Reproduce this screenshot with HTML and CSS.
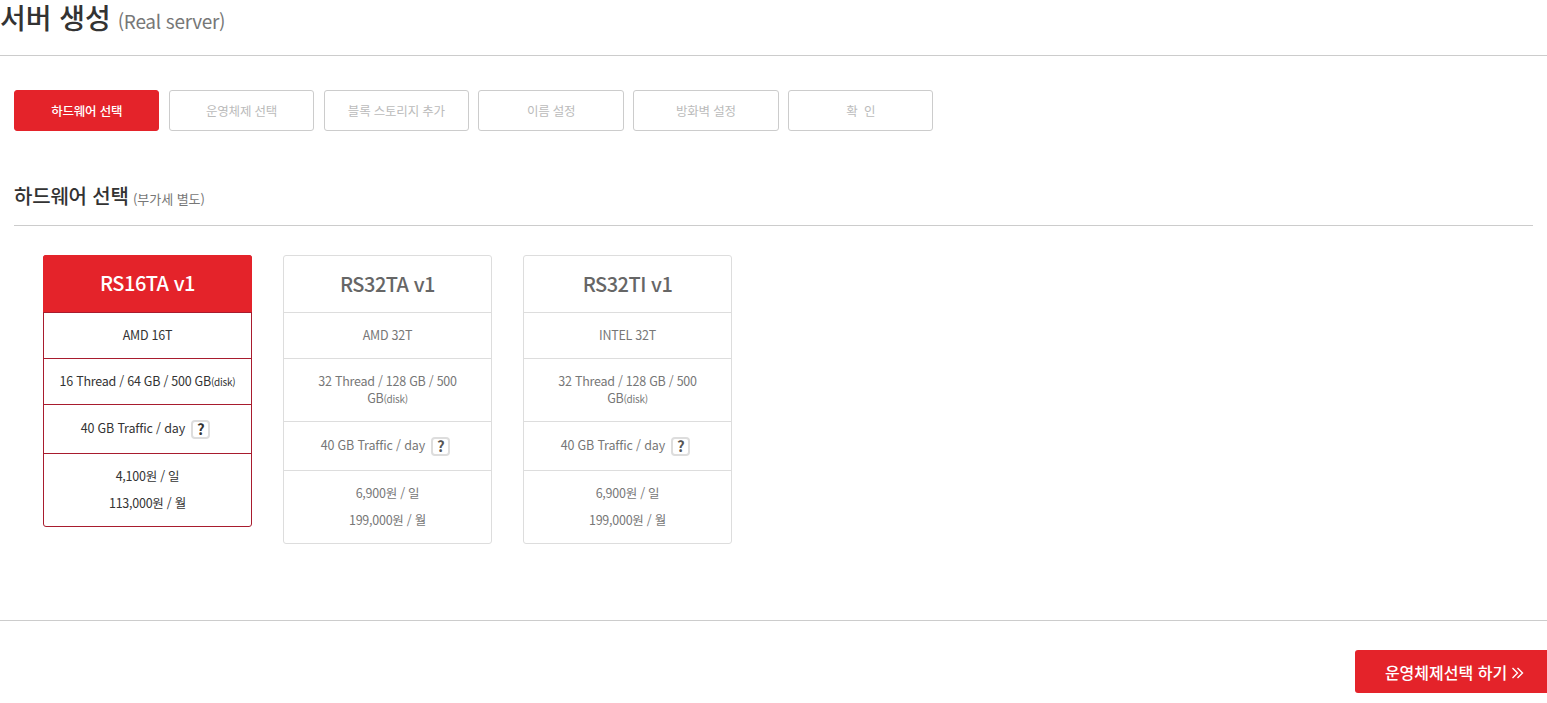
FILE: index.html
```html
<!DOCTYPE html>
<html lang="ko">
<head>
<meta charset="utf-8">
<title>서버 생성</title>
<link rel="stylesheet" href="styles.css">
</head>
<body>
<header class="page-head">
  <h1>서버 생성 <small>(Real server)</small></h1>
</header>
<nav class="steps">
  <a class="step active">하드웨어 선택</a>
  <a class="step">운영체제 선택</a>
  <a class="step">블록 스토리지 추가</a>
  <a class="step">이름 설정</a>
  <a class="step">방화벽 설정</a>
  <a class="step">확 &nbsp;인</a>
</nav>
<section class="hardware">
  <h2>하드웨어 선택 <small>(부가세 별도)</small></h2>
  <div class="cards">
    <article class="card selected">
      <h3>RS16TA v1</h3>
      <div class="row">AMD 16T</div>
      <div class="row">16 Thread / 64 GB / 500 GB<span class="sub">(disk)</span></div>
      <div class="row traffic">40 GB Traffic / day <span class="help">?</span></div>
      <div class="row price"><p>4,100원 / 일</p><p>113,000원 / 월</p></div>
    </article>
    <article class="card">
      <h3>RS32TA v1</h3>
      <div class="row">AMD 32T</div>
      <div class="row">32 Thread / 128 GB / 500 GB<span class="sub">(disk)</span></div>
      <div class="row traffic">40 GB Traffic / day <span class="help">?</span></div>
      <div class="row price"><p>6,900원 / 일</p><p>199,000원 / 월</p></div>
    </article>
    <article class="card">
      <h3>RS32TI v1</h3>
      <div class="row">INTEL 32T</div>
      <div class="row">32 Thread / 128 GB / 500 GB<span class="sub">(disk)</span></div>
      <div class="row traffic">40 GB Traffic / day <span class="help">?</span></div>
      <div class="row price"><p>6,900원 / 일</p><p>199,000원 / 월</p></div>
    </article>
  </div>
</section>
<footer class="actions">
  <a class="next">운영체제선택 하기<svg class="chev" viewBox="0 0 13 12" width="13" height="12"><path d="M1.5 1 6.5 6l-5 5M6.5 1l5 5-5 5" fill="none" stroke="currentColor" stroke-width="1.4"/></svg></a>
</footer>
</body>
</html>
```

FILE: styles.css
```css
* { box-sizing: border-box; }
html, body { margin: 0; padding: 0; }
body {
  background: #fff;
  color: #333;
  font-family: "Noto Sans CJK KR", "Noto Sans", sans-serif;
  font-size: 13px;
  letter-spacing: -0.25px;
  height: 703px;
  overflow: hidden;
}
.page-head {
  height: 56px;
  border-bottom: 1px solid #ccc;
}
h1 {
  margin: 0;
  font-size: 28px;
  line-height: 34px;
  font-weight: 500;
  color: #333;
  letter-spacing: 0;
}
h1 small {
  font-size: 19px;
  font-weight: 400;
  color: #777;
  margin-left: -1px;
  letter-spacing: -0.3px;
}
.steps {
  display: flex;
  gap: 9.5px;
  padding: 34px 0 0 14.1px;
}
.step {
  width: 145.3px;
  height: 41px;
  display: flex;
  align-items: center;
  justify-content: center;
  padding-bottom: 1px;
  border: 1px solid #ccc;
  border-radius: 3px;
  color: #bbb;
  font-size: 12.5px;
  letter-spacing: -0.2px;
}
.step.active {
  background: #e4232a;
  border-color: #e4232a;
  color: #fff;
  font-weight: 500;
}
.hardware { margin: 0 14px; }
h2 {
  margin: 50px 0 0;
  height: 45px;
  border-bottom: 1px solid #ccc;
  font-size: 20px;
  line-height: 30px;
  font-weight: 500;
  color: #333;
  letter-spacing: -0.2px;
}
h2 small {
  font-size: 13px;
  font-weight: 400;
  color: #777;
  margin-left: -1px;
  letter-spacing: -0.05px;
}
.cards {
  display: flex;
  align-items: flex-start;
  gap: 31px;
  padding: 29px 0 0 29px;
}
.card {
  width: 209px;
  border: 1px solid #ddd;
  border-radius: 3px;
  color: #777;
  text-align: center;
}
.card h3 {
  margin: 0;
  height: 56px;
  font-size: 20px;
  line-height: 55px;
  font-weight: 500;
  color: #666;
  letter-spacing: -0.5px;
}
.row {
  border-top: 1px solid #ddd;
  min-height: 46px;
  padding: 13px 13px 15px;
  font-size: 12.5px;
  line-height: 17px;
}
.sub { font-size: 10px; line-height: 1; }
.traffic {
  min-height: 49px;
  padding-top: 14px;
  padding-bottom: 14px;
  letter-spacing: -0.15px;
}
.help {
  display: inline-block;
  width: 19px;
  height: 19px;
  margin: 0 4px 0 3px;
  border: 2px solid #ddd;
  border-radius: 4px;
  font-size: 15px;
  line-height: 14px;
  font-weight: 700;
  color: #555;
  vertical-align: -2px;
  letter-spacing: 0;
}
.price { padding: 8px 0 10px; }
.price p { margin: 0; line-height: 27px; }
.card.selected { border-color: #a81c2e; color: #333; }
.card.selected h3 {
  background: #e4232a;
  color: #fff;
  margin: -1px -1px 0;
  height: 57px;
  line-height: 56px;
  border-radius: 3px 3px 0 0;
}
.card.selected .row { border-top-color: #a81c2e; }
.card.selected .help { color: #333; }
.actions {
  position: absolute;
  top: 620px;
  left: 0;
  right: 0;
  border-top: 1px solid #ccc;
  padding-top: 29px;
  display: flex;
  justify-content: flex-end;
}
.next {
  width: 192px;
  height: 43px;
  display: flex;
  align-items: center;
  justify-content: center;
  gap: 4px;
  padding-left: 7px;
  background: #e4232a;
  color: #fff;
  font-size: 16px;
  font-weight: 500;
  border-radius: 3px 0 0 3px;
  letter-spacing: 0;
}
.chev { margin-top: 2px; }
```
